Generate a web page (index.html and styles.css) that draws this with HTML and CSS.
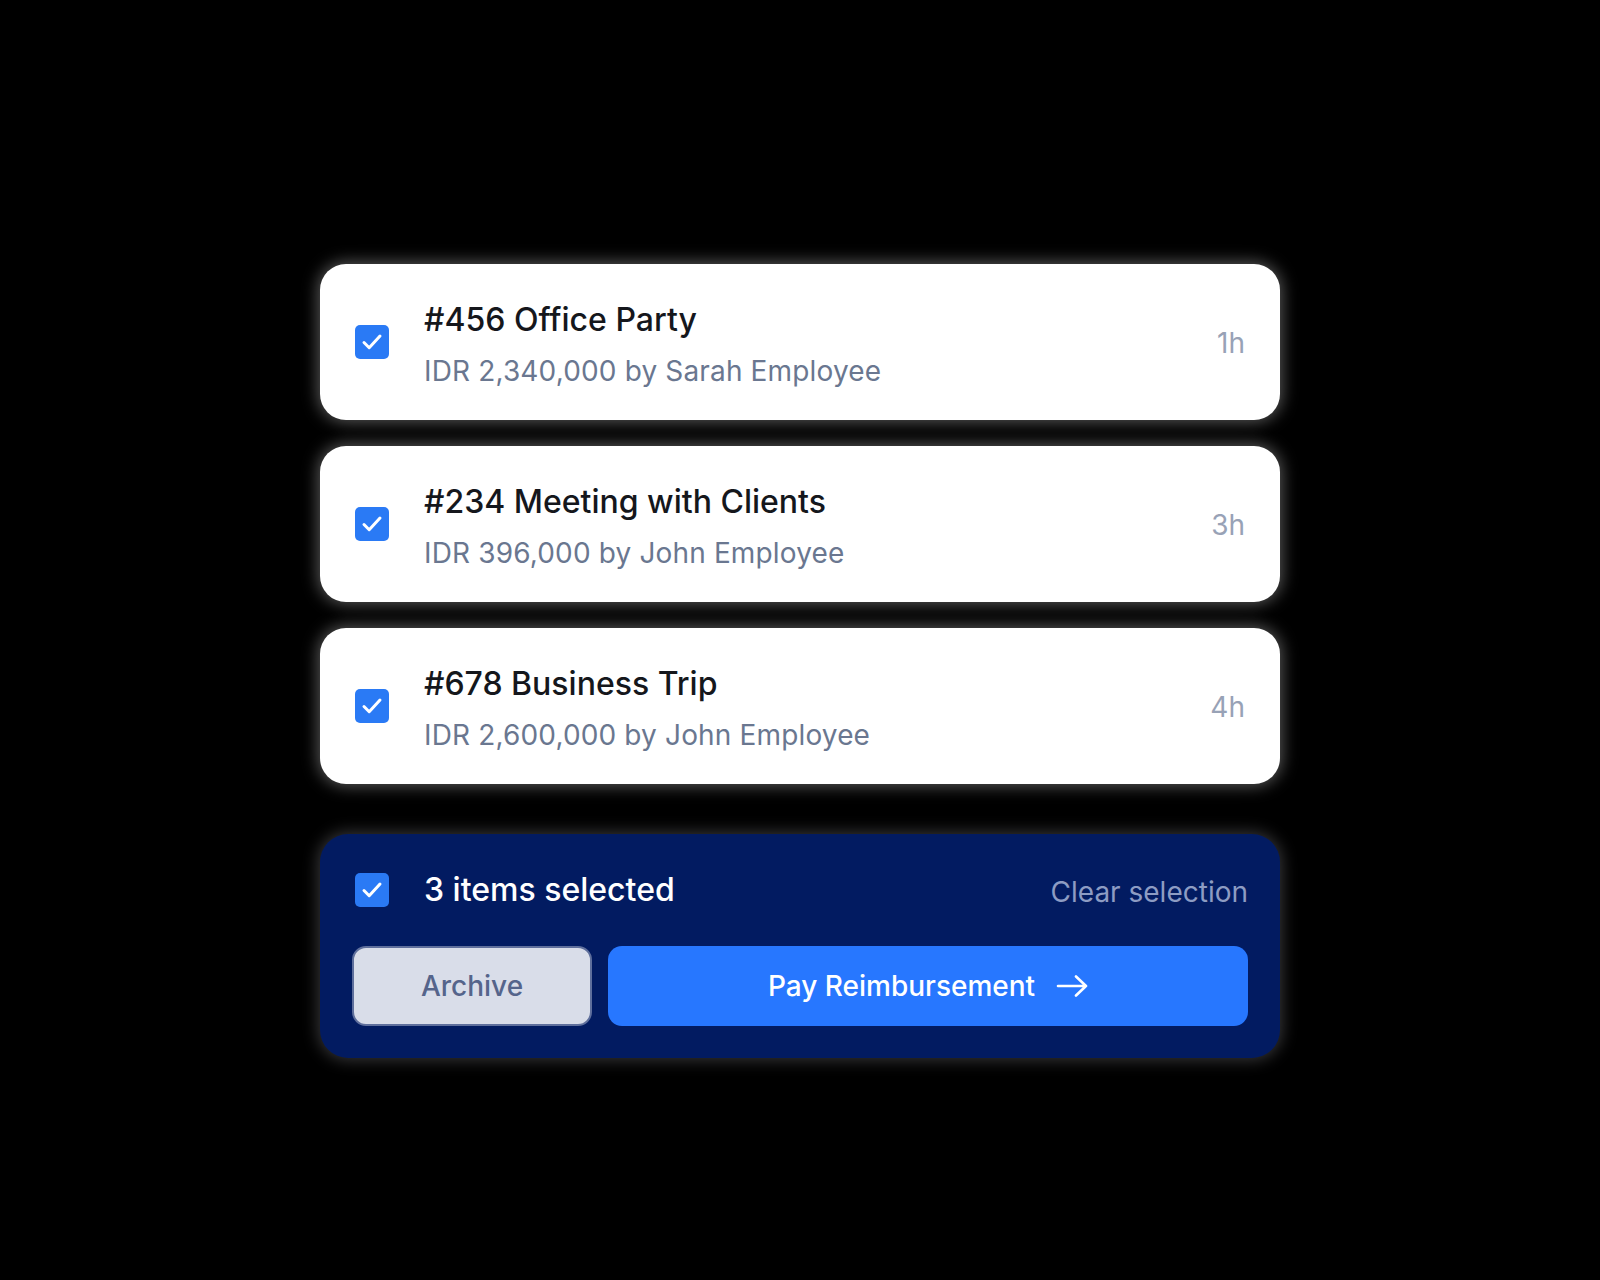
FILE: index.html
```html
<!DOCTYPE html>
<html lang="en">
<head>
<meta charset="utf-8">
<title>Reimbursements</title>
<link rel="stylesheet" href="styles.css">
</head>
<body>
<main class="stack">
  <div class="card">
    <span class="check"><svg viewBox="0 0 34 34" width="34" height="34"><path d="M9 17.5 L14.2 22.7 L25 11" fill="none" stroke="#fff" stroke-width="3" stroke-linecap="round" stroke-linejoin="round"/></svg></span>
    <div class="info">
      <div class="title">#456 Office Party</div>
      <div class="sub">IDR 2,340,000 by Sarah Employee</div>
    </div>
    <div class="time">1h</div>
  </div>
  <div class="card">
    <span class="check"><svg viewBox="0 0 34 34" width="34" height="34"><path d="M9 17.5 L14.2 22.7 L25 11" fill="none" stroke="#fff" stroke-width="3" stroke-linecap="round" stroke-linejoin="round"/></svg></span>
    <div class="info">
      <div class="title">#234 Meeting with Clients</div>
      <div class="sub">IDR 396,000 by John Employee</div>
    </div>
    <div class="time">3h</div>
  </div>
  <div class="card">
    <span class="check"><svg viewBox="0 0 34 34" width="34" height="34"><path d="M9 17.5 L14.2 22.7 L25 11" fill="none" stroke="#fff" stroke-width="3" stroke-linecap="round" stroke-linejoin="round"/></svg></span>
    <div class="info">
      <div class="title">#678 Business Trip</div>
      <div class="sub">IDR 2,600,000 by John Employee</div>
    </div>
    <div class="time">4h</div>
  </div>
  <section class="panel">
    <div class="panel-row">
      <span class="check"><svg viewBox="0 0 34 34" width="34" height="34"><path d="M9 17.5 L14.2 22.7 L25 11" fill="none" stroke="#fff" stroke-width="3" stroke-linecap="round" stroke-linejoin="round"/></svg></span>
      <div class="count">3 items selected</div>
      <div class="clear">Clear selection</div>
    </div>
    <div class="actions">
      <button class="btn-archive">Archive</button>
      <button class="btn-pay">Pay Reimbursement <svg class="arrow" viewBox="0 0 32 22" width="32" height="22"><path d="M2 11 H30 M20 1.5 L30 11 L20 20.5" fill="none" stroke="#fff" stroke-width="2.6" stroke-linecap="round" stroke-linejoin="round"/></svg></button>
    </div>
  </section>
</main>
</body>
</html>
```

FILE: styles.css
```css
* { box-sizing: border-box; }
html, body { margin: 0; padding: 0; }
body {
  background: #000;
  width: 1600px;
  height: 1280px;
  font-family: Inter, "Noto Sans", sans-serif;
  overflow: hidden;
}
.stack {
  width: 960px;
  margin: 264px auto 0;
  display: flex;
  flex-direction: column;
  gap: 26px;
}
.card {
  height: 156px;
  background: #fff;
  border-radius: 26px;
  padding: 0 35px;
  display: flex;
  align-items: center;
  gap: 35px;
  box-shadow: 0 0 16px 2px rgba(255, 255, 255, 0.35);
}
.check {
  width: 34px;
  height: 34px;
  flex: none;
  border-radius: 5px;
  background: #2a7af5;
  display: flex;
}
.info {
  flex: 1;
  display: flex;
  flex-direction: column;
  gap: 13px;
  padding-top: 5px;
}
.title {
  font-size: 32px;
  line-height: 40px;
  font-weight: 500;
  color: #15171c;
}
.sub {
  font-size: 28px;
  line-height: 36px;
  letter-spacing: 0.15px;
  color: #6a7790;
}
.time {
  font-size: 28px;
  color: #98a2b6;
  padding-top: 2px;
}
.panel {
  margin-top: 24px;
  height: 224px;
  background: #021b61;
  border-radius: 28px;
  padding: 32px;
  box-shadow: 0 0 16px 2px rgba(200, 200, 210, 0.28);
}
.panel-row {
  height: 48px;
  display: flex;
  align-items: center;
  gap: 35px;
  padding-left: 3px;
}
.count {
  flex: 1;
  font-size: 32px;
  line-height: 48px;
  font-weight: 500;
  color: #fff;
}
.clear {
  font-size: 28px;
  line-height: 48px;
  padding-top: 4px;
  color: #8d9cc3;
}
.actions {
  margin-top: 32px;
  height: 80px;
  display: flex;
  gap: 16px;
}
.btn-archive, .btn-pay {
  font-family: inherit;
  font-size: 28px;
  font-weight: 500;
  border-radius: 14px;
  cursor: pointer;
  display: flex;
  align-items: center;
  justify-content: center;
}
.btn-archive {
  width: 240px;
  background: #d9dde9;
  border: 2px solid #5f6f9c;
  color: #55648b;
}
.btn-pay {
  flex: 1;
  background: #2777ff;
  border: none;
  color: #fff;
  gap: 21px;
}
.arrow { display: block; }
```
